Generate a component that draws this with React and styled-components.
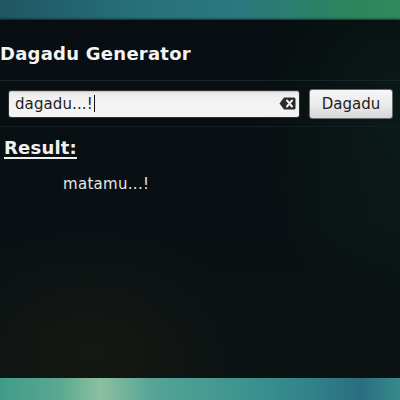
import React from 'react';
import styled, { createGlobalStyle } from 'styled-components';

const GlobalStyle = createGlobalStyle`
  html, body {
    margin: 0;
    padding: 0;
    background: #0a0f12;
  }
  #root {
    width: 400px;
    height: 400px;
    overflow: hidden;
  }
`;

const Screen = styled.div`
  display: flex;
  flex-direction: column;
  width: 400px;
  height: 400px;
  font-family: 'DejaVu Sans', 'Liberation Sans', sans-serif;
`;

const Desktop = styled.div`
  height: ${(p) => p.h}px;
  flex-shrink: 0;
  background: ${(p) => p.bg};
`;

const Window = styled.div`
  flex: 1;
  display: flex;
  flex-direction: column;
  background:
    radial-gradient(ellipse 160px 120px at 90px 330px, rgba(40, 38, 20, 0.35), transparent),
    radial-gradient(ellipse 140px 200px at 400px 100px, rgba(20, 60, 40, 0.25), transparent),
    linear-gradient(180deg, #070d10 0%, #0a1114 60%, #0b1212 100%);
  box-shadow: 0 -1px 2px rgba(0, 0, 0, 0.6), 0 1px 2px rgba(0, 0, 0, 0.6);
`;

const Header = styled.div`
  padding: 23px 0 15px 0;
  border-bottom: 1px solid #1b2326;
`;

const Title = styled.h1`
  margin: 0;
  font-size: 18px;
  line-height: 22px;
  font-weight: bold;
  letter-spacing: 0.25px;
  color: #f4f4f4;
`;

const Toolbar = styled.div`
  display: flex;
  align-items: center;
  gap: 9px;
  height: 45px;
  padding: 0 7px 0 8px;
  border-bottom: 1px solid #161e21;
`;

const Entry = styled.div`
  flex: 1;
  height: 26px;
  display: flex;
  align-items: center;
  padding: 0 3px 0 6px;
  border: 1px solid #2a2f31;
  border-radius: 3px;
  background: linear-gradient(180deg, #e6e6e6 0%, #f2f2f2 30%, #f4f4f4 100%);
  box-shadow: inset 0 1px 1px rgba(0, 0, 0, 0.15);
`;

const EntryText = styled.span`
  font-size: 15px;
  line-height: 18px;
  letter-spacing: 0.1px;
  color: #1e1e1e;
`;

const Caret = styled.span`
  width: 1px;
  height: 17px;
  margin-left: 1px;
  background: #111;
`;

const Spacer = styled.span`
  flex: 1;
`;

const Button = styled.button`
  width: 84px;
  height: 30px;
  padding: 0;
  border: 1px solid #6a6d6e;
  border-radius: 3px;
  background: linear-gradient(180deg, #f6f6f6 0%, #ececec 50%, #d6d6d6 100%);
  font-family: inherit;
  font-size: 15px;
  color: #222;
`;

const Body = styled.div`
  padding: 10px 0 0 4px;
  display: flex;
  flex-direction: column;
`;

const Heading = styled.div`
  font-size: 18px;
  line-height: 22px;
  font-weight: bold;
  letter-spacing: 0.2px;
  color: #f0f0f0;
  text-decoration: underline;
  text-decoration-thickness: 2px;
  text-underline-offset: 3px;
`;

const Output = styled.div`
  margin: 16px 0 0 59px;
  font-size: 15px;
  line-height: 18px;
  letter-spacing: 0.3px;
  color: #e8e8e8;
`;

const ClearIcon = () => (
  <svg width="17" height="13" viewBox="0 0 17 13">
    <path d="M5 0.5 H15 Q16.5 0.5 16.5 2 V11 Q16.5 12.5 15 12.5 H5 L0.5 6.5 Z" fill="#2a2a2a" />
    <path d="M8 3.5 L13 9.5 M13 3.5 L8 9.5" stroke="#f2f2f2" strokeWidth="2" strokeLinecap="round" />
  </svg>
);

export default function App() {
  return (
    <Screen>
      <GlobalStyle />
      <Desktop
        h={20}
        bg="linear-gradient(90deg, #1f5662 0%, #27707a 35%, #2a7880 60%, #2b845f 85%, #2f8a5a 100%)"
      />
      <Window>
        <Header>
          <Title>Dagadu Generator</Title>
        </Header>
        <Toolbar>
          <Entry>
            <EntryText>dagadu...!</EntryText>
            <Caret />
            <Spacer />
            <ClearIcon />
          </Entry>
          <Button>Dagadu</Button>
        </Toolbar>
        <Body>
          <Heading>Result:</Heading>
          <Output>matamu...!</Output>
        </Body>
      </Window>
      <Desktop
        h={22}
        bg="linear-gradient(90deg, #3f9c8a 0%, #5aa890 15%, #8cc0a0 25%, #55a495 38%, #3d9590 60%, #2f7f88 80%, #2a6e80 90%, #368a8a 100%)"
      />
    </Screen>
  );
}
